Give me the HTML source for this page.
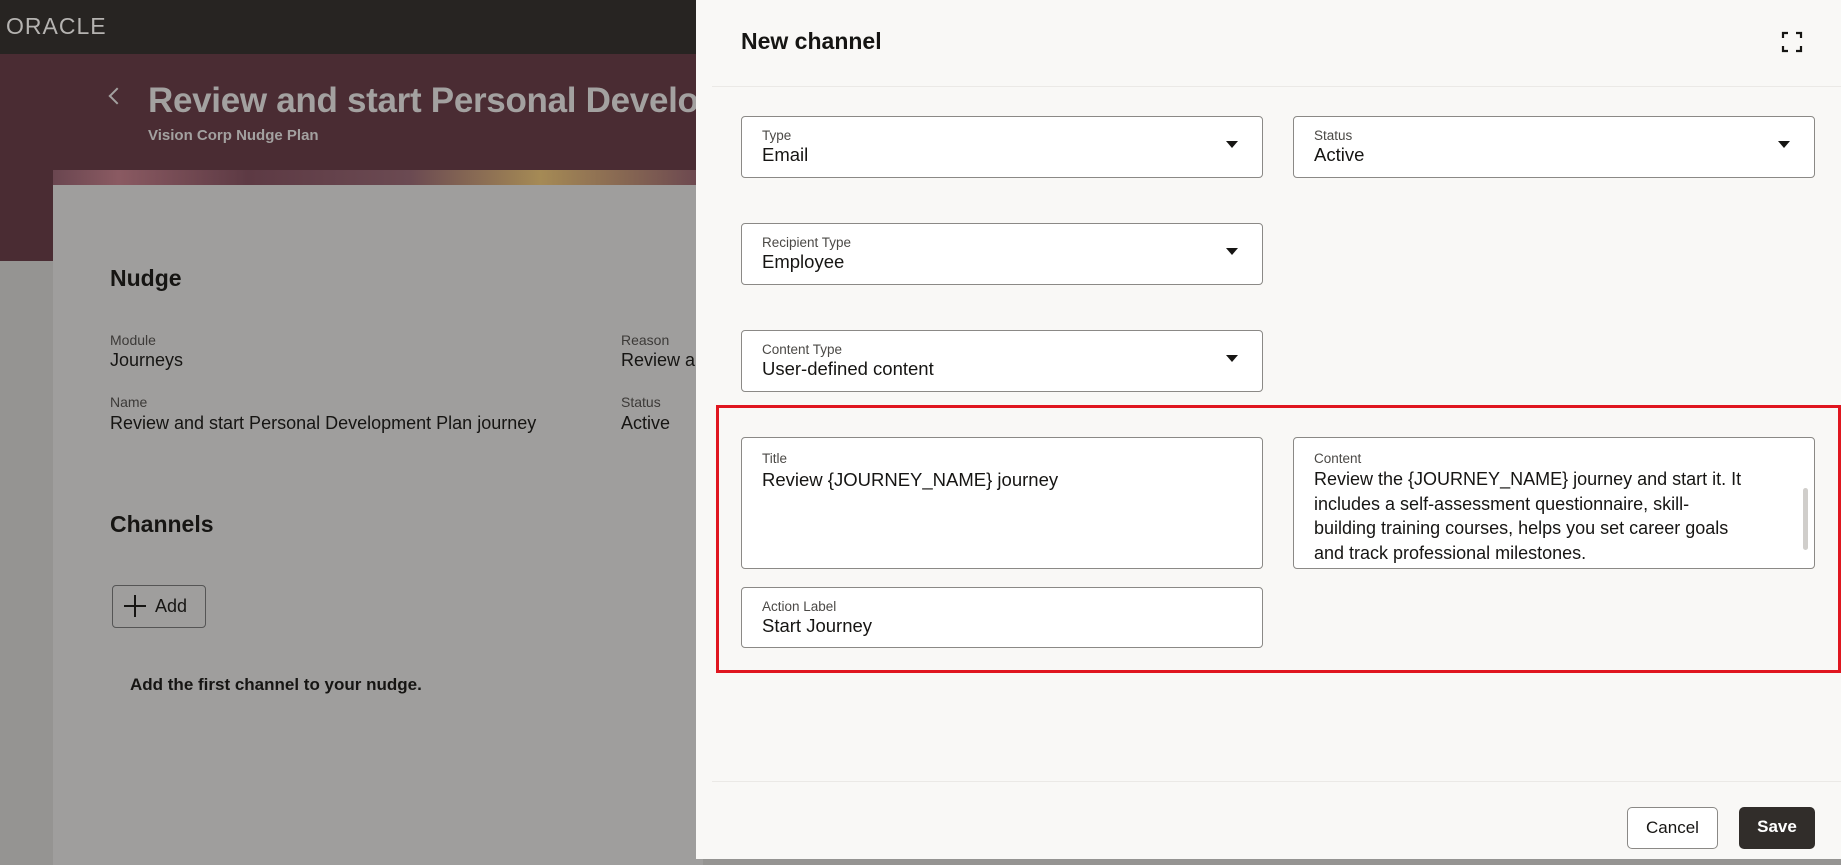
<!DOCTYPE html>
<html><head><meta charset="utf-8"><style>
*{box-sizing:border-box;margin:0;padding:0}
body{width:1841px;height:859px;overflow:hidden;position:relative;font-family:"Liberation Sans",sans-serif;background:#959492;color:#161513}
.abs{position:absolute}
.top{left:0;top:0;width:1841px;height:54px;background:#272422}
.logo{left:6px;top:13px;color:#b5b3b1;font-size:23px;letter-spacing:1px;font-weight:normal}
.band{left:0;top:54px;width:700px;height:207px;background:#4a2c33}
.card{left:53px;top:185px;width:650px;height:680px;background:#9f9e9d}
.strip{left:53px;top:170px;width:650px;height:16px;background:linear-gradient(90deg,#6a4650 0,#8a5a62 10%,#5d3a44 30%,#6b4a52 55%,#a58a55 75%,#6a4650 100%)}
.t1{left:148px;top:81px;font-size:35px;font-weight:bold;color:#a3a1a0;white-space:nowrap;letter-spacing:-0.3px}
.sub{left:148px;top:127px;font-size:15px;font-weight:bold;color:#a3a1a0}
.chev{left:111px;top:90px;width:12px;height:12px;border-left:2px solid #a3a1a0;border-bottom:2px solid #a3a1a0;transform:rotate(45deg)}
.h2{font-size:23px;font-weight:bold;color:#161513}
.lbl{font-size:14px;color:#3c3a38}
.val{font-size:18px;color:#161513;white-space:nowrap}
.addbtn{left:112px;top:585px;width:94px;height:43px;border:1px solid #555;border-radius:4px;font-size:18px;padding:10px 0 0 42px}
.panel{left:696px;top:0;width:1145px;height:859px;background:#f9f8f6}
.fld{position:absolute;background:#fff;border:1px solid #8b8986;border-radius:4px;padding:11px 20px 0 20px}
.fld .l{font-size:13.5px;color:#4b4946;line-height:16px}
.fld .v{font-size:18.5px;color:#161513;line-height:22px}
.arr{position:absolute;right:24px;top:24px;width:0;height:0;border-left:6px solid transparent;border-right:6px solid transparent;border-top:7px solid #161513}
.btn{position:absolute;top:807px;height:42px;border-radius:5px;font-size:17px;text-align:center;line-height:40px}
</style></head><body>
<div class="abs top"></div>
<div class="abs logo">ORACLE</div>
<div class="abs band"></div>
<div class="abs strip"></div>
<div class="abs card"></div>
<div class="abs chev"></div>
<div class="abs t1">Review and start Personal Development Plan journey</div>
<div class="abs sub">Vision Corp Nudge Plan</div>
<div class="abs h2" style="left:110px;top:265px">Nudge</div>
<div class="abs lbl" style="left:110px;top:332px">Module</div>
<div class="abs val" style="left:110px;top:350px">Journeys</div>
<div class="abs lbl" style="left:621px;top:332px">Reason</div>
<div class="abs val" style="left:621px;top:350px">Review and start</div>
<div class="abs lbl" style="left:110px;top:394px">Name</div>
<div class="abs val" style="left:110px;top:413px">Review and start Personal Development Plan journey</div>
<div class="abs lbl" style="left:621px;top:394px">Status</div>
<div class="abs val" style="left:621px;top:413px">Active</div>
<div class="abs h2" style="left:110px;top:511px">Channels</div>
<div class="abs addbtn">Add</div>
<div class="abs" style="left:124px;top:605px;width:22px;height:2px;background:#161513"></div>
<div class="abs" style="left:134px;top:595px;width:2px;height:22px;background:#161513"></div>
<div class="abs" style="left:130px;top:675px;font-size:17px;font-weight:bold">Add the first channel to your nudge.</div>

<div class="abs panel"></div>
<div class="abs" style="left:741px;top:28px;font-size:23px;font-weight:bold">New channel</div>
<svg class="abs" style="left:1781px;top:31px" width="22" height="22" viewBox="0 0 22 22" fill="none" stroke="#161513" stroke-width="2.2"><path d="M2 7V2h5M15 2h5v5M20 15v5h-5M7 20H2v-5"/></svg>
<div class="abs" style="left:712px;top:86px;width:1129px;height:1px;background:#ebe9e6"></div>

<div class="fld" style="left:741px;top:116px;width:522px;height:62px"><div class="l">Type</div><div class="v">Email</div><div class="arr"></div></div>
<div class="fld" style="left:1293px;top:116px;width:522px;height:62px"><div class="l">Status</div><div class="v">Active</div><div class="arr"></div></div>
<div class="fld" style="left:741px;top:223px;width:522px;height:62px"><div class="l">Recipient Type</div><div class="v">Employee</div><div class="arr"></div></div>
<div class="fld" style="left:741px;top:330px;width:522px;height:62px"><div class="l">Content Type</div><div class="v">User-defined content</div><div class="arr"></div></div>

<div class="abs" style="left:716px;top:405px;width:1125px;height:268px;border:3px solid #e0161f"></div>
<div class="fld" style="left:741px;top:437px;width:522px;height:132px;padding-top:13px"><div class="l">Title</div><div class="v" style="margin-top:2px">Review {JOURNEY_NAME} journey</div></div>
<div class="fld" style="left:1293px;top:437px;width:522px;height:132px;padding-top:13px"><div class="l">Content</div><div class="v" style="font-size:18px;line-height:24.5px;width:470px;white-space:nowrap">Review the {JOURNEY_NAME} journey and start it. It<br>includes a self-assessment questionnaire, skill-<br>building training courses, helps you set career goals<br>and track professional milestones.</div>
<div style="position:absolute;right:6px;top:50px;width:5px;height:62px;background:#d0cecb;border-radius:3px"></div></div>
<div class="fld" style="left:741px;top:587px;width:522px;height:61px"><div class="l">Action Label</div><div class="v">Start Journey</div></div>

<div class="abs" style="left:712px;top:781px;width:1129px;height:1px;background:#ebe9e6"></div>
<div class="btn" style="left:1627px;width:91px;border:1px solid #8b8986;background:#fff">Cancel</div>
<div class="btn" style="left:1739px;width:76px;background:#312d2a;color:#fff;font-weight:bold">Save</div>
</body></html>
